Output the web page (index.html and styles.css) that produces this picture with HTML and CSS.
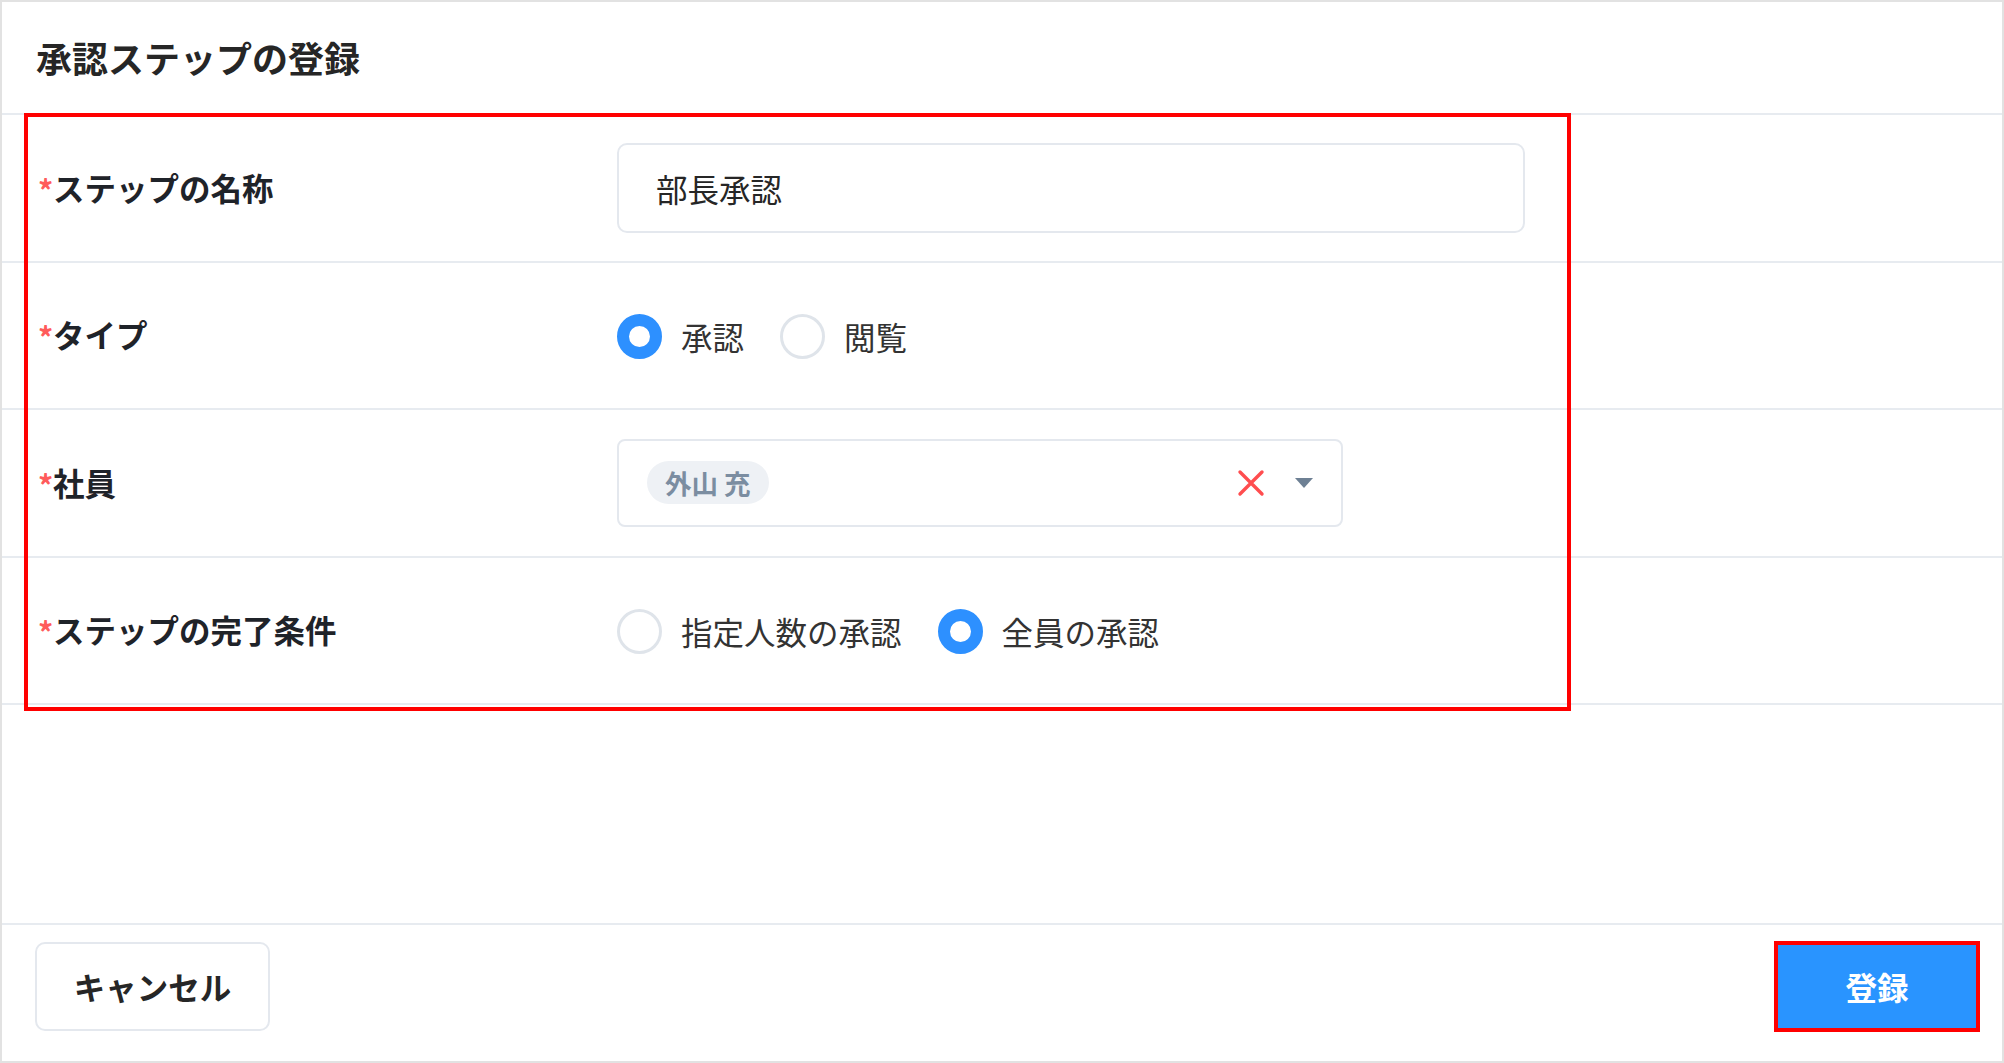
FILE: index.html
```html
<!DOCTYPE html>
<html lang="ja">
<head>
<meta charset="utf-8">
<title>承認ステップの登録</title>
<link rel="stylesheet" href="styles.css">
</head>
<body>
<div class="panel">
  <div class="header"><h1 class="title">承認ステップの登録</h1></div>
  <div class="form">
    <div class="row">
      <div class="label"><span class="req">*</span>ステップの名称</div>
      <div class="control">
        <div class="input">部長承認</div>
      </div>
    </div>
    <div class="row">
      <div class="label"><span class="req">*</span>タイプ</div>
      <div class="control radios">
        <label class="radio"><span class="dot on"></span><span>承認</span></label>
        <label class="radio"><span class="dot"></span><span>閲覧</span></label>
      </div>
    </div>
    <div class="row">
      <div class="label"><span class="req">*</span>社員</div>
      <div class="control">
        <div class="select">
          <span class="tag">外山 充</span>
          <span class="icons">
            <svg class="clear" width="28" height="28" viewBox="0 0 28 28"><path d="M3 3 L25 25 M25 3 L3 25" stroke="#ff4d4f" stroke-width="3.4" stroke-linecap="round" fill="none"/></svg>
            <svg class="caret" width="18" height="11" viewBox="0 0 18 11"><path d="M0 0 H18 L9 10 Z" fill="#6e8094"/></svg>
          </span>
        </div>
      </div>
    </div>
    <div class="row">
      <div class="label"><span class="req">*</span>ステップの完了条件</div>
      <div class="control radios">
        <label class="radio"><span class="dot"></span><span>指定人数の承認</span></label>
        <label class="radio"><span class="dot on"></span><span>全員の承認</span></label>
      </div>
    </div>
  </div>
  <div class="filler"></div>
  <div class="footer">
    <button class="btn cancel">キャンセル</button>
    <button class="btn submit">登録</button>
  </div>
  <div class="annot"></div>
</div>
</body>
</html>
```
FILE: styles.css
```css
html, body {
  margin: 0;
  padding: 0;
  background: #fff;
}
body {
  width: 2004px;
  height: 1063px;
  font-family: "Noto Sans CJK JP", "Noto Sans", sans-serif;
  color: #262626;
}
.panel {
  position: relative;
  box-sizing: border-box;
  width: 2004px;
  height: 1063px;
  border: 2px solid #e2e2e2;
  display: flex;
  flex-direction: column;
}
.header {
  box-sizing: border-box;
  height: 113px;
  border-bottom: 2px solid #e7ebf0;
  display: flex;
  align-items: center;
  padding-left: 34px;
}
.title {
  margin: 0;
  font-size: 36px;
  font-weight: 700;
  line-height: 1;
  color: #262626;
  padding-bottom: 2px;
}
.form {
  display: flex;
  flex-direction: column;
}
.row {
  box-sizing: border-box;
  height: 147.5px;
  border-bottom: 2px solid #e7ebf0;
  display: flex;
  align-items: center;
  padding-left: 36px;
}
.label {
  width: 579px;
  flex: none;
  font-size: 31.5px;
  font-weight: 700;
  line-height: 1.2;
  color: #1f2329;
  display: flex;
  align-items: flex-start;
}
.req {
  color: #ff5b5b;
  font-size: 30px;
  line-height: 1;
  width: 15px;
  flex: none;
  margin-top: 5px;
  font-weight: 700;
}
.control {
  display: flex;
  align-items: center;
}
.input {
  box-sizing: border-box;
  width: 908px;
  height: 90px;
  border: 2px solid #e4e8ee;
  border-radius: 10px;
  padding-left: 37px;
  display: flex;
  align-items: center;
  font-size: 31.5px;
  color: #262626;
}
.radios {
  gap: 36px;
  padding-top: 2px;
}
.radio {
  display: flex;
  align-items: center;
  gap: 19px;
  font-size: 31.5px;
  color: #333;
}
.dot {
  box-sizing: border-box;
  width: 45px;
  height: 45px;
  border-radius: 50%;
  border: 3px solid #dfe4ea;
  background: #fff;
  flex: none;
}
.dot.on {
  border: 12px solid #2d90ff;
}
.select {
  box-sizing: border-box;
  width: 726px;
  height: 88px;
  border: 2px solid #e4e8ee;
  border-radius: 8px;
  padding: 0 28px 0 28px;
  display: flex;
  align-items: center;
  justify-content: space-between;
}
.tag {
  box-sizing: border-box;
  height: 43px;
  padding: 0 18px;
  border-radius: 22px;
  background: #eef1f5;
  color: #7b8da1;
  font-size: 26.5px;
  font-weight: 700;
  display: flex;
  align-items: center;
}
.icons {
  display: flex;
  align-items: center;
  gap: 30px;
}
.clear { display: block; }
.caret { display: block; margin-top: 2px; }
.filler { flex: 1; }
.footer {
  box-sizing: border-box;
  height: 138px;
  border-top: 2px solid #e7ebf0;
  display: flex;
  align-items: center;
  justify-content: space-between;
  padding: 0 26px 14px 33px;
}
.btn {
  font-family: "Noto Sans CJK JP", "Noto Sans", sans-serif;
  font-size: 31.5px;
  font-weight: 700;
  cursor: pointer;
  box-sizing: border-box;
  margin: 0;
}
.cancel {
  width: 235px;
  height: 89px;
  border: 2px solid #e4e8ee;
  border-radius: 10px;
  background: #fff;
  color: #262626;
}
.submit {
  width: 198px;
  height: 83px;
  border: none;
  border-radius: 0;
  background: #2994ff;
  color: #fff;
  outline: 4px solid #ff0000;
}
.annot {
  position: absolute;
  left: 22px;
  top: 111px;
  width: 1547px;
  height: 598px;
  box-sizing: border-box;
  border: 4px solid #ff0000;
  pointer-events: none;
}
```
